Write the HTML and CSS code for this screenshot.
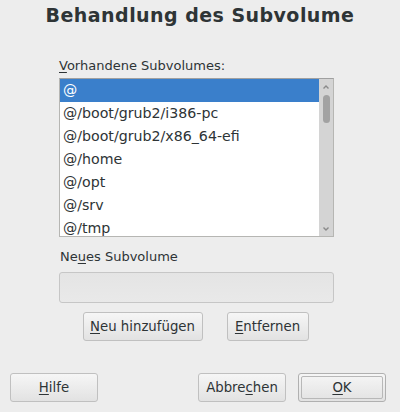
FILE: index.html
```html
<!DOCTYPE html>
<html>
<head>
<meta charset="utf-8">
<link rel="stylesheet" href="styles.css">
</head>
<body>
<div class="dialog">
  <h1 class="title">Behandlung des Subvolume</h1>
  <div class="content">
    <div class="label"><u>V</u>orhandene Subvolumes:</div>
    <div class="listbox">
      <div class="rows">
        <div class="row sel">@</div>
        <div class="row">@/boot/grub2/i386-pc</div>
        <div class="row">@/boot/grub2/x86_64-efi</div>
        <div class="row">@/home</div>
        <div class="row">@/opt</div>
        <div class="row">@/srv</div>
        <div class="row">@/tmp</div>
      </div>
      <div class="scrollbar">
        <svg class="arrow" width="8" height="6" viewBox="0 0 8 6"><path d="M1.5 4.5 L4 2 L6.5 4.5" fill="none" stroke="#8a8a8a" stroke-width="1.4"/></svg>
        <div class="track"><div class="thumb"></div></div>
        <svg class="arrow" width="8" height="6" viewBox="0 0 8 6"><path d="M1.5 1.5 L4 4 L6.5 1.5" fill="none" stroke="#8a8a8a" stroke-width="1.4"/></svg>
      </div>
    </div>
    <div class="label label2">Ne<u>u</u>es Subvolume</div>
    <div class="input"></div>
    <div class="actions">
      <button class="btn btn-add"><u>N</u>eu hinzufügen</button>
      <button class="btn btn-del"><u>E</u>ntfernen</button>
    </div>
  </div>
  <div class="footer">
    <button class="btn btn-foot"><u>H</u>ilfe</button>
    <div class="spacer"></div>
    <button class="btn btn-foot">Abbre<u>c</u>hen</button>
    <button class="btn btn-foot btn-default"><span class="inner"><u>O</u>K</span></button>
  </div>
</div>
</body>
</html>
```
FILE: styles.css
```css
* { box-sizing: border-box; }
html, body { margin: 0; padding: 0; }
body {
  background: #ededed;
  font-family: "DejaVu Sans", sans-serif;
  color: #2e3436;
  width: 400px;
  height: 412px;
  overflow: hidden;
}
.dialog {
  display: flex;
  flex-direction: column;
  height: 412px;
}
.title {
  margin: 0;
  padding-top: 4px;
  text-align: center;
  font-size: 19px;
  font-weight: bold;
  letter-spacing: 0.45px;
  line-height: 22px;
  color: #2e3436;
}
.content {
  padding: 0 66px 0 59px;
  display: flex;
  flex-direction: column;
}
.label {
  font-size: 13px;
  line-height: 16px;
  margin-top: 32px;
  padding-left: 0;
}
u { text-decoration-thickness: 1px; text-underline-offset: 2px; }
.listbox {
  margin-top: 4px;
  height: 159px;
  border: 1px solid #b6b6b3;
  border-top-color: #a0a0a0;
  background: #fff;
  display: flex;
}
.rows { flex: 1; overflow: hidden; }
.row {
  height: 23px;
  line-height: 23px;
  font-size: 14.2px;
  padding-left: 3px;
  white-space: nowrap;
}
.row.sel { background: #3a7fcb; color: #fff; }
.scrollbar {
  width: 14px;
  background: #d4d4d4;
  display: flex;
  flex-direction: column;
  align-items: center;
  padding: 5px 0 4px;
}
.arrow { flex: none; }
.track { flex: 1; width: 100%; padding: 5px 3px 0 4px; }
.thumb {
  width: 7px;
  height: 28px;
  border-radius: 4px;
  background: #a2a2a2;
}
.label2 { margin-top: 12px; padding-left: 1px; }
.input {
  margin-top: 7px;
  height: 31px;
  border: 1px solid #c6c6c6;
  border-radius: 3px;
  background: linear-gradient(#e4e4e4, #e9e9e9);
}
.actions {
  display: flex;
  justify-content: center;
  gap: 24px;
  margin-top: 9px;
  padding-left: 0;
  padding-right: 2px;
}
.btn {
  font-family: "DejaVu Sans", sans-serif;
  font-size: 13.3px;
  color: #2e3436;
  height: 29px;
  border: 1px solid #c0c0c0;
  border-radius: 3px;
  background: linear-gradient(#f6f6f6, #e2e2e2);
  padding: 0;
}
.btn-add { width: 120px; }
.btn-del { width: 82px; }
.footer {
  margin-top: auto;
  display: flex;
  padding: 0 14px 10px 10px;
  gap: 12px;
}
.spacer { flex: 1; }
.btn-foot { width: 88px; }
.btn-default {
  border: 1px solid #b0b0b0;
  padding: 2px;
}
.btn-default .inner {
  display: flex;
  align-items: center;
  justify-content: center;
  height: 100%;
  border: 1px solid #b8b8b8;
  border-radius: 2px;
}
```
